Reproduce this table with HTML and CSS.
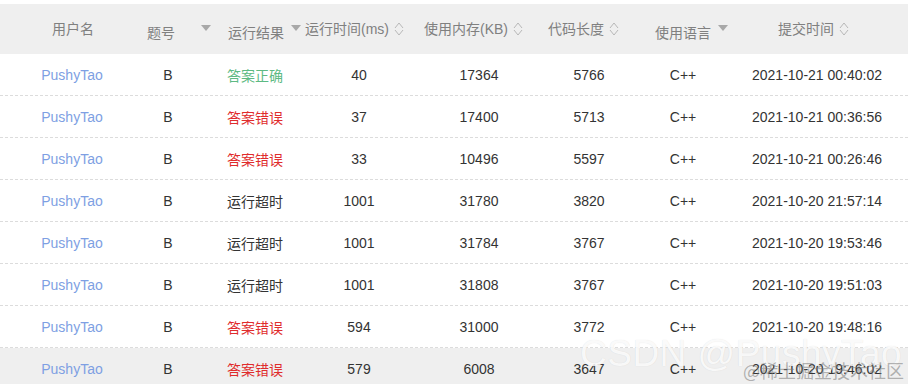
FILE: index.html
```html
<!DOCTYPE html>
<html lang="zh-CN">
<head>
<meta charset="utf-8">
<title>提交记录</title>
<link rel="stylesheet" href="styles.css">
</head>
<body>
<div class="page">
  <div class="head">
    <div class="h h1"><span class="lbl">用户名</span></div>
    <div class="h h2"><span class="lbl low">题号</span><span class="caret c-wide"></span></div>
    <div class="h h3"><span class="lbl low">运行结果</span><span class="caret"></span></div>
    <div class="h h4"><span class="lbl">运行时间(ms)</span><svg class="sort" viewBox="0 0 10 16"><polyline points="1,7 5,2 9,7"/><polyline points="1,9 5,14 9,9"/></svg></div>
    <div class="h h5"><span class="lbl">使用内存(KB)</span><svg class="sort" viewBox="0 0 10 16"><polyline points="1,7 5,2 9,7"/><polyline points="1,9 5,14 9,9"/></svg></div>
    <div class="h h6"><span class="lbl">代码长度</span><svg class="sort" viewBox="0 0 10 16"><polyline points="1,7 5,2 9,7"/><polyline points="1,9 5,14 9,9"/></svg></div>
    <div class="h h7"><span class="lbl low">使用语言</span><span class="caret"></span></div>
    <div class="h h8"><span class="lbl">提交时间</span><svg class="sort" viewBox="0 0 10 16"><polyline points="1,7 5,2 9,7"/><polyline points="1,9 5,14 9,9"/></svg></div>
  </div>

  <div class="row">
    <div class="user">PushyTao</div><div>B</div><div class="ok">答案正确</div><div>40</div><div>17364</div><div>5766</div><div>C++</div><div>2021-10-21 00:40:02</div>
  </div>
  <div class="row">
    <div class="user">PushyTao</div><div>B</div><div class="wa">答案错误</div><div>37</div><div>17400</div><div>5713</div><div>C++</div><div>2021-10-21 00:36:56</div>
  </div>
  <div class="row">
    <div class="user">PushyTao</div><div>B</div><div class="wa">答案错误</div><div>33</div><div>10496</div><div>5597</div><div>C++</div><div>2021-10-21 00:26:46</div>
  </div>
  <div class="row">
    <div class="user">PushyTao</div><div>B</div><div>运行超时</div><div>1001</div><div>31780</div><div>3820</div><div>C++</div><div>2021-10-20 21:57:14</div>
  </div>
  <div class="row">
    <div class="user">PushyTao</div><div>B</div><div>运行超时</div><div>1001</div><div>31784</div><div>3767</div><div>C++</div><div>2021-10-20 19:53:46</div>
  </div>
  <div class="row">
    <div class="user">PushyTao</div><div>B</div><div>运行超时</div><div>1001</div><div>31808</div><div>3767</div><div>C++</div><div>2021-10-20 19:51:03</div>
  </div>
  <div class="row">
    <div class="user">PushyTao</div><div>B</div><div class="wa">答案错误</div><div>594</div><div>31000</div><div>3772</div><div>C++</div><div>2021-10-20 19:48:16</div>
  </div>
  <div class="row hover">
    <div class="user">PushyTao</div><div>B</div><div class="wa">答案错误</div><div>579</div><div>6008</div><div>3647</div><div>C++</div><div>2021-10-20 19:46:02</div>
  </div>

  <div class="wm-big">CSDN @PushyTao</div>
  <div class="wm-small">@稀土掘金技术社区</div>
</div>
</body>
</html>
```

FILE: styles.css
```css
* { box-sizing: border-box; }
html, body { margin: 0; padding: 0; background: #fff; }
body {
  font-family: "Liberation Sans", Arial, "Noto Sans CJK SC", sans-serif;
  font-size: 14px;
  color: #333;
  overflow: hidden;
}
.page {
  position: relative;
  width: 908px;
  height: 384px;
  padding-top: 4px;
  overflow: hidden;
}
.head {
  display: flex;
  height: 50px;
  background: #efefef;
  padding-left: 52px;
  color: #808080;
}
.h {
  display: flex;
  align-items: center;
  white-space: nowrap;
}
.h1 { width: 95px; }
.h2 { width: 81px; }
.h3 { width: 77px; }
.h4 { width: 119px; }
.h5 { width: 124px; }
.h6 { width: 107px; }
.h7 { width: 123px; }
.h8 { flex: 1; }
.lbl { line-height: 20px; }
.lbl.low { margin-top: 8px; }
.caret {
  width: 0; height: 0;
  margin-left: 7px;
  margin-top: -2px;
  border-left: 5px solid transparent;
  border-right: 5px solid transparent;
  border-top: 6px solid #a8a8a8;
}
.caret.c-wide { margin-left: 26px; }
.sort {
  width: 10px; height: 16px;
  margin-left: 5px;
  fill: none;
  stroke: #b8b8b8;
  stroke-width: 1;
}
.row {
  display: grid;
  grid-template-columns: 144px 48px 126px 82px 158px 62px 126px 142px 1fr;
  height: 42px;
  align-items: center;
  border-bottom: 1px dashed #dcdcdc;
  text-align: center;
}
.row > div { white-space: nowrap; }
.row.hover { background: #efefef; }
.user { color: #7e9fe3; }
.ok { color: #5dba83; }
.wa { color: #e02c2c; }

.wm-big {
  position: absolute;
  left: 580px;
  top: 333px;
  font-size: 37px;
  font-family: "Liberation Sans", Arial, sans-serif;
  color: rgba(255,255,255,0.85);
  text-shadow: 0 0 1px rgba(0,0,0,0.12);
  letter-spacing: 0.5px;
  white-space: nowrap;
}
.wm-small {
  position: absolute;
  left: 743px;
  top: 357px;
  font-size: 18px;
  color: rgba(120,120,120,0.55);
  font-family: "Noto Sans CJK SC", sans-serif;
  white-space: nowrap;
}
```
